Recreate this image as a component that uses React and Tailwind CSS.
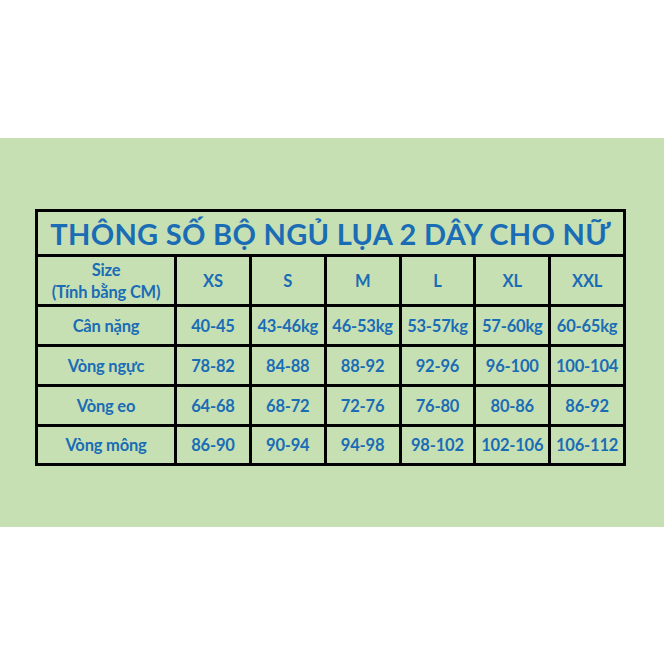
import React from 'react';

const sizes = ['XS', 'S', 'M', 'L', 'XL', 'XXL'];

const rows = [
  { label: 'Cân nặng', values: ['40-45', '43-46kg', '46-53kg', '53-57kg', '57-60kg', '60-65kg'] },
  { label: 'Vòng ngực', values: ['78-82', '84-88', '88-92', '92-96', '96-100', '100-104'] },
  { label: 'Vòng eo', values: ['64-68', '68-72', '72-76', '76-80', '80-86', '86-92'] },
  { label: 'Vòng mông', values: ['86-90', '90-94', '94-98', '98-102', '102-106', '106-112'] },
];

function Cell({ children }) {
  return (
    <div className="bg-[#c6e0b4] flex items-center justify-center text-center whitespace-nowrap leading-[22px]">
      {children}
    </div>
  );
}

export default function App() {
  return (
    <div className="w-[664px] h-[664px] bg-white flex flex-col font-['Lato','Noto_Sans',sans-serif] font-bold text-[#1a6cb5]">
      <div className="h-[138px]" />
      <div className="h-[389px] bg-[#c6e0b4] pt-[71px] pl-[35px]">
        <div className="w-[591px] bg-black p-[3px] grid grid-cols-[136px_repeat(6,1fr)] grid-rows-[42px_47px_37px_37px_37px_36px] gap-[3px] text-[16.5px] tracking-[-0.2px]">
          <div className="col-span-7 bg-[#c6e0b4] flex items-center justify-center text-[29px] tracking-[0.3px] pt-[2px]">
            THÔNG SỐ BỘ NGỦ LỤA 2 DÂY CHO NỮ
          </div>

          <Cell>
            <span className="pt-[1px]">Size<br />(Tính bằng CM)</span>
          </Cell>
          {sizes.map((s) => (
            <Cell key={s}>{s}</Cell>
          ))}

          {rows.map((row) => (
            <React.Fragment key={row.label}>
              <Cell>{row.label}</Cell>
              {row.values.map((v, i) => (
                <Cell key={i}>{v}</Cell>
              ))}
            </React.Fragment>
          ))}
        </div>
      </div>
      <div className="flex-1" />
    </div>
  );
}
